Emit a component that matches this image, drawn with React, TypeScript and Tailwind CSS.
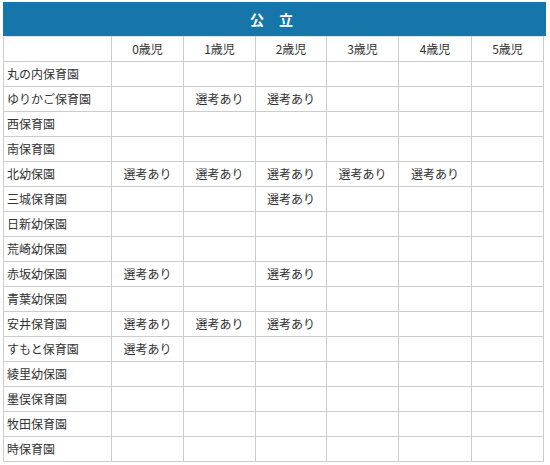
const ages = ['0歳児', '1歳児', '2歳児', '3歳児', '4歳児', '5歳児'];

const rows: { name: string; marks: number[] }[] = [
  { name: '丸の内保育園', marks: [] },
  { name: 'ゆりかご保育園', marks: [1, 2] },
  { name: '西保育園', marks: [] },
  { name: '南保育園', marks: [] },
  { name: '北幼保園', marks: [0, 1, 2, 3, 4] },
  { name: '三城保育園', marks: [2] },
  { name: '日新幼保園', marks: [] },
  { name: '荒崎幼保園', marks: [] },
  { name: '赤坂幼保園', marks: [0, 2] },
  { name: '青葉幼保園', marks: [] },
  { name: '安井保育園', marks: [0, 1, 2] },
  { name: 'すもと保育園', marks: [0] },
  { name: '綾里幼保園', marks: [] },
  { name: '墨俣保育園', marks: [] },
  { name: '牧田保育園', marks: [] },
  { name: '時保育園', marks: [] },
];

const widths = [108, 72, 72, 71, 72, 73, 72];

export default function App() {
  return (
    <div className="min-h-[465px] bg-white pl-[3px] pt-[2px] text-[12px] text-[#333] [font-family:'Noto_Sans_CJK_JP','Noto_Sans_CJK_SC',sans-serif]">
      <div className="flex h-[34px] w-[543px] items-center justify-center bg-[#1676a9] text-[14px] font-bold tracking-[6px] text-white">
        公 立
      </div>
      <table className="w-[541px] table-fixed border-collapse">
        <colgroup>
          {widths.map((w, i) => (
            <col key={i} style={{ width: w }} />
          ))}
        </colgroup>
        <thead>
          <tr className="h-[25px]">
            <th className="border border-[#cccccc] border-t-[#d6eaf5] p-0" />
            {ages.map((a) => (
              <th key={a} className="border border-[#cccccc] border-t-[#d6eaf5] p-0 text-center font-normal leading-none">
                {a}
              </th>
            ))}
          </tr>
        </thead>
        <tbody>
          {rows.map((r) => (
            <tr key={r.name} className="h-[25px]">
              <td className="border border-[#cccccc] px-[3px] py-0 leading-none whitespace-nowrap">{r.name}</td>
              {ages.map((a, i) => (
                <td key={a} className="border border-[#cccccc] p-0 text-center leading-none">
                  {r.marks.includes(i) ? '選考あり' : ''}
                </td>
              ))}
            </tr>
          ))}
        </tbody>
      </table>
    </div>
  );
}
